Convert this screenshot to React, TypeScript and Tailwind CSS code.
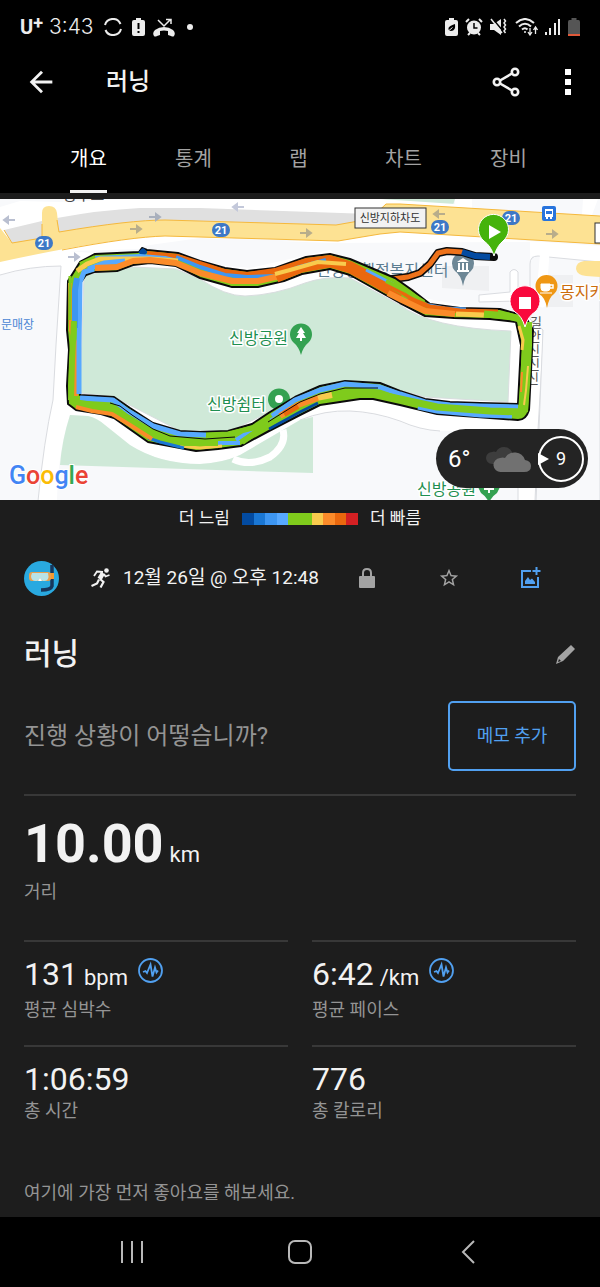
import { useState } from 'react';
import { MdArrowBack, MdStarBorder } from 'react-icons/md';

const TABS = ['개요', '통계', '랩', '차트', '장비'];

// slow -> fast
const PACE_COLORS = [
  '#034ba1',
  '#1a77d4',
  '#3d96f2',
  '#57a9ff',
  '#7fcb1c',
  '#7fcb1c',
  '#f9cb4d',
  '#fb8b2a',
  '#ea680e',
  '#d42023',
];

const STATS = [
  { value: '131', unit: 'bpm', label: '평균 심박수', pulse: true },
  { value: '6:42', unit: '/km', label: '평균 페이스', pulse: true },
  { value: '1:06:59', unit: '', label: '총 시간', pulse: false },
  { value: '776', unit: '', label: '총 칼로리', pulse: false },
];

interface TrackSegment {
  color: string;
  width: number;
  points: string;
}

const SEGMENTS: TrackSegment[] = [
  // top
  { color: '#034ba1', width: 5, points: '140,254 143,251 146,254' },
  { color: '#ea680e', width: 6, points: '147,254 178,257 200,264 225,272 247,275 275,271 306,261 330,258 350,264 376,278 400,290 425,306' },
  { color: '#57a9ff', width: 4, points: '85,264 96,258 140,256 165,258 182,262' },
  { color: '#7fcb1c', width: 4, points: '80,264 95,257' },
  { color: '#7fcb1c', width: 4, points: '176,259 192,266 204,272 232,284 256,284' },
  { color: '#3d96f2', width: 4, points: '176,257 200,267 225,275 247,277 275,276 300,267 326,260' },
  { color: '#f9cb4d', width: 5, points: '77,271 87,264 100,259 150,259 178,261' },
  { color: '#57a9ff', width: 5, points: '88,269 104,263 125,261' },
  { color: '#fb8b2a', width: 6, points: '95,268 117,267 133,261 150,260 176,263 200,273 232,281 258,281 284,275' },
  { color: '#ea680e', width: 7, points: '277,279 302,269 330,264 350,270 376,284 400,298' },
  { color: '#f9cb4d', width: 4, points: '275,274 290,270 318,262 346,264' },
  { color: '#57a9ff', width: 3, points: '366,270 393,284' },
  { color: '#7fcb1c', width: 4, points: '386,281 408,292 424,302' },
  // top right
  { color: '#3d96f2', width: 3, points: '424,304 445,308 466,309' },
  { color: '#ea680e', width: 5, points: '408,298 430,307 460,311 498,312' },
  { color: '#fb8b2a', width: 6, points: '388,293 402,300 425,311 455,314' },
  { color: '#f9cb4d', width: 5, points: '456,314 484,315' },
  { color: '#7fcb1c', width: 7, points: '484,314 508,316 520,319' },
  // right
  { color: '#7fcb1c', width: 10, points: '527,322 527,345 525,385 523,412' },
  { color: '#f9cb4d', width: 3, points: '519,326 523,340 522,350' },
  { color: '#f9cb4d', width: 2, points: '528,366 526,390 524,405' },
  { color: '#fb8b2a', width: 2, points: '522,372 521,392' },
  // bottom, right to left
  { color: '#57a9ff', width: 5, points: '518,407 480,406 450,405 425,402 400,394 380,387 345,384 320,390 295,400 272,416' },
  { color: '#57a9ff', width: 5, points: '512,416 480,415 437,411 418,407' },
  { color: '#7fcb1c', width: 7, points: '522,412 490,411 437,407 400,399 373,393 345,393 330,396' },
  { color: '#034ba1', width: 3, points: '269,429 300,412 318,403' },
  { color: '#f9cb4d', width: 6, points: '332,395 316,398' },
  { color: '#fb8b2a', width: 6, points: '318,398 298,405 280,416' },
  { color: '#ea680e', width: 6, points: '298,406 284,414' },
  { color: '#57a9ff', width: 4, points: '275,418 255,428 236,440' },
  { color: '#7fcb1c', width: 6, points: '280,417 262,428 242,442' },
  { color: '#7fcb1c', width: 5, points: '270,419 253,428 228,434 206,435' },
  { color: '#57a9ff', width: 5, points: '206,435 180,434 153,426 128,411 113,400 80,398' },
  { color: '#57a9ff', width: 4, points: '240,443 217,443' },
  { color: '#f9cb4d', width: 3, points: '222,446 200,448 180,446' },
  { color: '#7fcb1c', width: 6, points: '218,443 185,443 160,438 135,424 110,408 74,402' },
  { color: '#1a77d4', width: 3, points: '184,448 160,442 148,438' },
  { color: '#fb8b2a', width: 4, points: '152,439 130,425 112,414 92,411 76,407' },
  // left
  { color: '#fb8b2a', width: 4, points: '76,396 76,345 71,330 70,283' },
  { color: '#7fcb1c', width: 3, points: '70,320 70,276' },
  { color: '#57a9ff', width: 5, points: '79,394 79,345 80,282 84,272 94,269' },
  { color: '#3d96f2', width: 6, points: '75,328 75,290 77,278' },
  { color: '#7fcb1c', width: 6, points: '71,400 72,360 74,321' },
];

const TRACK_RING =
  'M142 248 L139 252 L95 254 L80 262 L68 281 L67 330 L69 350 L67 386 L68 404 L76 410 L101 414 L114 418 L148 442 L196 451 L218 449 L241 446 L269 431 L300 415 L320 405 L360 399 L373 399 L400 405 L437 414 L490 418 L518 420 Q526 420 529 410 L532 350 L533 330 L525 316 L500 309 L460 308 L430 304 L412 290 L395 278 L350 259 L330 254 L306 257 L275 268 L247 271 L225 268 L200 261 L178 253 L147 250 Z ' +
  'M79 350 L81 282 L86 275 L94 272 L117 271 L133 265 L150 263 L176 266 L200 278 L232 287 L258 287 L284 281 L302 274 L330 269 L350 275 L400 303 L425 316 L454 318 L490 319 L516 322 L521 345 L518 404 L480 403 L450 402 L425 399 L400 391 L380 383 L345 381 L320 386 L295 397 L270 412 L252 424 L228 431 L200 432 L180 431 L153 423 L130 408 L114 397 L80 395 Z';

function Shield({ x, y }: { x: number; y: number }) {
  return (
    <g>
      <rect x={x - 9} y={y - 7} width="18" height="14" rx="7" fill="#3d78c6" />
      <text x={x} y={y + 4} fontSize="11" fontWeight="700" fill="#fff" textAnchor="middle">
        21
      </text>
    </g>
  );
}

function RoadArrow({ x, y, left, color }: { x: number; y: number; left?: boolean; color: string }) {
  return (
    <path
      d={left ? `M${x + 6} ${y} h-10 M${x - 1} ${y - 3} l-4 3 4 3z` : `M${x - 6} ${y} h10 M${x + 1} ${y - 3} l4 3 -4 3z`}
      stroke={color}
      strokeWidth="2"
      fill={color}
    />
  );
}

function RouteMap() {
  return (
    <svg viewBox="0 199 600 301" className="block w-full" role="img" aria-label="러닝 경로 지도">
      <rect x="0" y="199" width="600" height="301" fill="#f8f9fb" />
      <path d="M380 199 H455 L453 205 L395 202Z" fill="#cfe9d8" />

      {/* White roads */}
      <g fill="#fff" stroke="#dadce0" strokeWidth="1">
        <path d="M0 207 L20 201 L60 202 L130 199 H380 L470 205 V225 L200 240 L60 262 L0 275 L-2 240Z" stroke="none" />
        <path d="M0 275 Q30 266 61 266 L56 345 L53 400 Q44 440 38 501 H57 Q58 450 70 415 L88 416 Q97 418 105 425 L130 445 Q160 464 200 464 Q222 463 240 455 L300 420 Q325 400 350 401 Q375 402 400 411 Q420 420 440 425 L518 425 V501 H535 L538 430 L543 345 L545 300 L530 262 L532 256 L600 262 V246 L400 232 L180 250 L60 255Z" stroke="none" />
        <path d="M300 420 Q325 410 350 411 Q375 412 400 421 Q420 430 440 431 H518 V410 H400 L350 395 L290 415Z" stroke="none" />
        <path d="M0 275 Q30 266 61 266 L56 345 L53 400 Q44 440 38 501" fill="none" />
        <path d="M518 501 V431 M535 501 L538 430 L543 345 L543 300" fill="none" />
        <path d="M300 420 Q325 410 350 411 Q375 412 400 421 Q420 430 440 431" fill="none" />
        <path d="M70 251 L140 249 L143 246 L200 238 L330 243 L530 242 L531 318 L380 290 L330 250 L250 268Z" fill="#f8f9fb" stroke="none" />
        <path d="M530 319 V264 Q530 256 538 256 L600 262 L600 502 L536 502 L543 330Z" fill="#f8f9fb" />
        <path d="M455 199 V209 L472 210 V199Z M583 199 L582 215 L592 215 L598 199Z M541 242 L536 300 Q541 312 546 305 L550 245Z" stroke="none" />
        <path d="M479 302 V295 L510 292 V272 Q514 267 518 272 V301Z" />
      </g>
      <path d="M300 421 Q325 411 350 412 Q375 413 400 422 Q420 431 440 432 H517 V500 H313 V420Z" fill="#f8f9fb" />
      <path d="M442 266 h47 v25 l-47 -3z M546 275 h27 v32 h-27z" fill="#eff0f2" />

      {/* Parks */}
      <g fill="#cfe9d8" stroke="#d9dddf" strokeWidth="1">
        <path d="M84 275 L133 267 L176 269 L200 279 Q225 296 245 296 Q275 295 305 283 Q325 276 350 278 L400 305 Q430 328 511 331 L508 402 L425 397 L380 385 L345 383 L320 388 L270 412 L230 431 L180 431 L114 397 L80 393Z" />
        <path d="M70 415 L88 416 Q97 418 105 425 L130 445 Q160 464 200 464 Q222 463 240 455 L300 420 L313 417 L313 473 L60 465 Q62 440 70 415Z" stroke="none" />
      </g>
      <path d="M283 430 Q287 445 270 457 Q250 467 233 459" fill="none" stroke="#fff" strokeWidth="7" />

      {/* Highway */}
      <path d="M4 230 L42 221 V239 L12 244Z M57 218 Q100 210 140 208 H200 L370 214 V220 L336 226 L200 221 L130 222 L59 233Z" fill="#e0e0e0" />
      <path d="M0 228 L12 243 L42 238 V213 Q42 206 49 206 Q56 206 57 213 L59 232 Q130 220 165 220 L336 225 L370 219 L386 204 L400 204 L600 216 V244 L400 232 L380 234 L338 241 L165 236 Q110 238 0 262Z" fill="#fde293" />
      <path d="M4 230 L12 243 L42 238 V224 M57 220 L59 232 Q130 220 165 220 L336 225 L370 219 L386 204 L400 204 L600 216 M600 244 L400 232 L380 234 L338 241 L165 236 Q130 237 62 250" fill="none" stroke="#f5b83c" strokeWidth="1" />
      <path d="M600 261 H584 Q576 262 576 269 Q577 275 586 276 L600 277Z" fill="#fde293" />
      <RoadArrow x={9} y={220} left color="#b9bfd0" />
      <RoadArrow x={155} y={217} color="#a9b0bd" />
      <RoadArrow x={136} y={229} color="#b8ad8b" />
      <RoadArrow x={238} y={207} left color="#c3c8da" />
      <RoadArrow x={306} y={233} color="#b8ad8b" />
      <RoadArrow x={439} y={214} left color="#b8ad8b" />
      <RoadArrow x={552} y={234} color="#b8ad8b" />
      <RoadArrow x={74} y={257} color="#b9bfd0" />
      <Shield x={44} y={243} />
      <Shield x={221} y={230} />
      <Shield x={440} y={227} />
      <Shield x={511} y={218} />

      {/* Underpass signs */}
      <rect x="355" y="208" width="71" height="20" fill="#f2f2f2" stroke="#333" />
      <text x="390" y="222" fontSize="11" fill="#333" textAnchor="middle">
        신방지하차도
      </text>
      <rect x="595" y="223" width="20" height="20" fill="#fff" stroke="#333" />

      {/* Bus stop */}
      <rect x="542" y="206" width="14" height="15" rx="2" fill="#2874dc" />
      <path d="M545 209 h8 v8 h-1 v2 h-2 v-2 h-2 v2 h-2 v-2 h-1z" fill="#fff" />
      <path d="M546 211 h6 v3 h-6z" fill="#2874dc" />

      <text x="63" y="200" fontSize="15" fill="#444">
        동우로
      </text>
      <text x="316" y="276" fontSize="16" fill="#5b7c90">
        신방동행정복지센터
      </text>
      <text x="1" y="329" fontSize="12" fill="#4a86d4">
        문매장
      </text>
      <g fontSize="13" fill="#555">
        <text x="530" y="327">길</text>
        <text x="529" y="341">안</text>
        <text x="528" y="355">신</text>
        <text x="528" y="369">신</text>
        <text x="527" y="383">신</text>
      </g>

      {/* Place pins */}
      <path d="M463 286 Q461 275 455 271 A11 11 0 1 1 471 271 Q465 275 463 286Z" fill="#6d8796" />
      <path d="M457 262 l6 -4 6 4z M457 270 h12 v2 h-12z" fill="#fff" />
      <path d="M459 263 v7 M463 263 v7 M467 263 v7" stroke="#fff" strokeWidth="2" />
      <path d="M547 308 Q545 297 539 294 A11 11 0 1 1 554 294 Q549 297 547 308Z" fill="#ef9714" />
      <path d="M541 284 h9 v4 q0 3 -3 3 h-3 q-3 0 -3 -3z M540 293 h12" fill="#fff" stroke="#fff" strokeWidth="1" />
      <path d="M550 285 h3 v3 h-3" fill="none" stroke="#fff" strokeWidth="1.5" />
      <path d="M301 355 Q299 347 293 342 A11 11 0 1 1 309 342 Q303 347 301 355Z" fill="#34a151" />
      <path d="M301 327 l4 6 h-2 l3 5 h-4 v3 h-2 v-3 h-4 l3 -5 h-2z" fill="#fff" />
      <path d="M279 417 Q277 410 271 407 A11 11 0 1 1 287 407 Q281 410 279 417Z" fill="#34a151" />
      <circle cx="279" cy="399" r="4" fill="#fff" />
      <path d="M489 503 Q487 497 481 493 L478 487 H500 L497 493 Q491 497 489 503Z" fill="#34a151" />
      <path d="M484 488 h10 v2 h-4 v3 h-2 v-3 h-4z" fill="#fff" />

      <g fontSize="16" strokeWidth="3" stroke="#fff" strokeLinejoin="round">
        <text x="229" y="344" fill="#1f8f50" className="[paint-order:stroke]">
          신방공원
        </text>
        <text x="207" y="410" fill="#1f8f50" className="[paint-order:stroke]">
          신방쉼터
        </text>
        <text x="417" y="495" fill="#1f8f50" className="[paint-order:stroke]">
          신방공원
        </text>
        <text x="560" y="298" fill="#cc6d0c" className="[paint-order:stroke]">
          몽지카
        </text>
      </g>

      {/* Track */}
      <g fill="none" strokeLinejoin="round" strokeLinecap="round">
        <path d="M392 279 L408 277 L420 273 L430 264 L438 253 L447 251 L462 252 L475 256 L494 257" stroke="#0b0b0b" strokeWidth="8" />
        <path d="M392 279 L408 277 L420 273 L430 264 L438 253 L447 251 L462 252" stroke="#ee721a" strokeWidth="5" />
        <path d="M462 252 L475 256 L490 257" stroke="#034ba1" strokeWidth="6" strokeLinecap="butt" />
      </g>
      <path d={TRACK_RING} fill="#7fcb1c" fillRule="evenodd" stroke="#0b0b0b" strokeWidth="2" strokeLinejoin="round" />
      {SEGMENTS.map((segment, i) => (
        <polyline
          key={i}
          points={segment.points}
          fill="none"
          stroke={segment.color}
          strokeWidth={segment.width}
          strokeLinejoin="round"
        />
      ))}
      {/* Gap between the laps */}
      <path
        d="M110 403 L120 406 L132 415 L153 429 L170 436 L205 439 L235 437 M268 422 L300 402 L320 394 L345 388 L378 388"
        fill="none"
        stroke="#0b0b0b"
        strokeWidth="1"
      />

      {/* Start and finish */}
      <path d="M494 256 Q491 246 484 241 A15 15 0 1 1 503 241 Q497 246 494 256Z" fill="#45b30b" stroke="#fff" strokeWidth="1" />
      <path d="M489 225 V239 L501 232Z" fill="#fff" />
      <path d="M525 327 Q522 316 515 312 A15 15 0 1 1 535 312 Q528 316 525 327Z" fill="#f9093c" stroke="#fff" strokeWidth="1" />
      <rect x="519" y="297" width="12" height="12" fill="#fff" />

      {/* Map attribution */}
      <text x="9" y="484" fontSize="25" fontWeight="500" stroke="#fff" strokeWidth="2" className="[paint-order:stroke]">
        <tspan fill="#4285f4">G</tspan>
        <tspan fill="#ea4335">o</tspan>
        <tspan fill="#fbbc05">o</tspan>
        <tspan fill="#4285f4">g</tspan>
        <tspan fill="#34a853">l</tspan>
        <tspan fill="#ea4335">e</tspan>
      </text>
    </svg>
  );
}

function WeatherPill() {
  return (
    <div className="absolute right-3 bottom-3 flex h-[59px] w-38 items-center rounded-full bg-[#242424] pr-1 pl-3 text-white">
      <span className="text-2xl">6°</span>
      <svg width="46" height="28" viewBox="0 0 46 28" className="ml-4" aria-hidden="true">
        <path d="M6 19 A6 6 0 0 1 6 7 Q8 6 10 7 A9 9 0 0 1 26 7 L26 19Z" fill="#3d3d3d" />
        <path d="M15 27 A7 7 0 0 1 14 13 Q17 12 19 13 A11 11 0 0 1 39 15 Q45 16 45 21 Q45 27 38 27Z" fill="#717171" />
      </svg>
      <div className="relative ml-auto flex size-[46px] items-center justify-center rounded-full border-2 border-white text-lg">
        <svg width="11" height="12" viewBox="0 0 11 12" className="absolute -left-0.5" aria-hidden="true">
          <path d="M0 0 L11 6 L0 12Z" fill="#fff" />
        </svg>
        9
      </div>
    </div>
  );
}

function StatusBar() {
  return (
    <div className="flex h-[54px] items-center justify-between px-5 text-[#ececec]">
      <div className="flex items-center">
        <span className="text-xl leading-6 font-bold">U</span>
        <span className="self-start text-lg leading-4 font-bold">+</span>
        <span className="ml-1.5 font-['Inter',sans-serif] text-[21px] leading-6 font-light">3:43</span>
        <svg width="18" height="18" viewBox="0 0 18 18" className="ml-2.5" fill="none" stroke="currentColor" strokeWidth="2">
          <path d="M1 7 A8.2 8.2 0 0 1 16.500 6 M17 11 A8.200 8.200 0 0 1 1.500 12" />
        </svg>
        <svg width="13" height="18" viewBox="0 0 13 18" className="ml-2.5" fill="currentColor">
          <path fillRule="evenodd" d="M4 0 h5 v2 h2 q2 0 2 2 v12 q0 2 -2 2 h-9 q-2 0 -2 -2 v-12 q0 -2 2 -2 h2z M5.500 5 v6 h2 v-6z M5.500 13 v2 h2 v-2z" />
        </svg>
        <svg width="22" height="19" viewBox="0 0 22 19" className="ml-2" fill="currentColor">
          <path d="M11 9 Q16 9 20 12 Q23 15 21 18 Q20 19 18 18 L15 17 V13 Q11 12 7 13 V17 L4 18 Q2 19 1 18 Q-1 15 2 12 Q6 9 11 9Z" />
          <path d="M5 2 L11 8 L17 2 M13 1.500 H18 V6" fill="none" stroke="currentColor" strokeWidth="1.5" />
        </svg>
        <span className="ml-3 size-1.5 rounded-full bg-[#ececec]" />
      </div>
      <div className="flex items-center gap-[7px]">
        <svg width="13" height="18" viewBox="0 0 13 18" fill="currentColor">
          <path d="M4 0 h5 v2 h2 q2 0 2 2 v12 q0 2 -2 2 h-9 q-2 0 -2 -2 v-12 q0 -2 2 -2 h2z" />
          <path d="M10 6 Q11 13 6 13 Q3 13 3.500 10 Q4 8 10 6Z" fill="#000" />
          <path d="M2 13.500 Q5 12 7.500 9.500" fill="none" stroke="#ececec" strokeWidth="1" />
        </svg>
        <svg width="18" height="18" viewBox="0 0 18 18" fill="currentColor">
          <circle cx="9" cy="9.500" r="7" />
          <path d="M1 4 L4 1 M14 1 L17 4 M3 17 L5 15 M15 17 L13 15" stroke="currentColor" strokeWidth="2" />
          <path d="M9 5 V10 H12.500" fill="none" stroke="#000" strokeWidth="1.500" />
        </svg>
        <svg width="18" height="18" viewBox="0 0 18 18" fill="currentColor">
          <path d="M0 6 H4 L11 1 V17 L4 12 H0Z" />
          <path d="M2 0 L13 13" stroke="#000" strokeWidth="1.500" />
          <path d="M1 1 L12 15" stroke="currentColor" strokeWidth="1.500" />
          <path d="M14 1 l1.500 2 -1.500 2 1.500 2 -1.500 2 1.500 2 -1.500 2 1.500 2" fill="none" stroke="currentColor" strokeWidth="1.500" />
        </svg>
        <svg width="23" height="18" viewBox="0 0 23 18" fill="none" stroke="currentColor" strokeWidth="2">
          <path d="M1 5 Q10 -3 19 5 M4 8.500 Q10 3 16 8.500 M7 11.500 Q10 9 12.500 11.500" />
          <circle cx="10" cy="14" r="1" fill="currentColor" stroke="none" />
          <path d="M15 10 V16 M13 14 l2 3 2 -3 M20.500 16 V10 M18.500 12 l2 -3 2 3" strokeWidth="1.300" />
        </svg>
        <svg width="16" height="18" viewBox="0 0 16 18" fill="currentColor">
          <path d="M0 14 h2 v3 h-2z M4 10 h2 v7 h-2z M9 5 h2 v12 h-2z M13 1 h2 v16 h-2z" />
        </svg>
        <svg width="12" height="18" viewBox="0 0 12 18">
          <path d="M3.500 0 h5 v2 h2 q1.500 0 1.500 2 v14 h-12 v-14 q0 -2 1.500 -2 h2z" fill="#555" />
          <path d="M0 16 h12 v2 h-12z" fill="#e0593a" />
        </svg>
      </div>
    </div>
  );
}

function PulseIcon() {
  return (
    <svg width="25" height="25" viewBox="0 0 25 25" fill="none" stroke="#51a0f0" aria-hidden="true">
      <circle cx="12.500" cy="12.500" r="11.500" strokeWidth="1.800" />
      <path d="M5 14 L7.500 13 L9 15 L12.500 6.500 L14.500 18.500 L17 9.500 L18.500 14.500 L20 12.500" strokeWidth="1.800" />
    </svg>
  );
}

export default function App() {
  const [activeTab, setActiveTab] = useState('개요');

  return (
    <div className="flex min-h-screen flex-col bg-[#1d1d1d] font-['Roboto','Noto_Sans_CJK_KR',sans-serif] text-[#f2f2f2]">
      <header className="border-b-[6px] border-[#1c1c1c] bg-black">
        <StatusBar />
        <div className="flex h-14 items-center pr-5 pl-6">
          <button aria-label="뒤로">
            <MdArrowBack size={34} />
          </button>
          <h1 className="ml-12 text-2xl font-medium">러닝</h1>
          <button className="ml-auto" aria-label="공유">
            <svg width="28" height="30" viewBox="0 0 28 30" fill="none" stroke="currentColor" strokeWidth="2.600">
              <circle cx="23" cy="5" r="3.200" />
              <circle cx="5" cy="15" r="3.200" />
              <circle cx="23" cy="25" r="3.200" />
              <path d="M8 13.500 L20 6.500 M8 16.500 L20 23.500" />
            </svg>
          </button>
          <button className="ml-9 flex w-6 flex-col items-center gap-1" aria-label="더보기">
            <span className="size-1.5 bg-white" />
            <span className="size-1.5 bg-white" />
            <span className="size-1.5 bg-white" />
          </button>
        </div>
        <nav className="mt-[18px] grid h-[65px] grid-cols-5 pr-[39px] pl-9">
          {TABS.map((tab) => (
            <button key={tab} onClick={() => setActiveTab(tab)} className="flex justify-center text-xl">
              <span
                className={`flex h-full items-center border-b-[3px] ${
                  tab === activeTab ? 'border-[#f2f2f2] text-white' : 'border-transparent text-[#a3a3a3]'
                }`}
              >
                {tab}
              </span>
            </button>
          ))}
        </nav>
      </header>

      <div className="relative">
        <RouteMap />
        <WeatherPill />
      </div>

      {/* Pace legend */}
      <div className="flex h-[37px] items-center justify-center gap-3 text-[17px]">
        <span>더 느림</span>
        <div className="flex h-3 w-29">
          {PACE_COLORS.map((color, i) => (
            <span key={i} className="flex-1" style={{ background: color }} />
          ))}
        </div>
        <span>더 빠름</span>
      </div>

      <main className="px-6 pb-3">
        <div className="flex h-[82px] items-center">
          <svg width="35" height="35" viewBox="0 0 35 35" role="img" aria-label="프로필">
            <circle cx="17.500" cy="17.500" r="17.500" fill="#29a9e0" />
            <path d="M28 4 V25 Q27 29 17 29" fill="none" stroke="#17375c" strokeWidth="3.500" />
            <path d="M26 12 h4 v6 h-4z" fill="#f39a32" />
            <rect x="5" y="11" width="22" height="9" rx="3" fill="#e9a04e" />
            <path d="M8 12 H24 Q26 20 20 20 Q17 20 16 17 Q15 20 12 20 Q7 20 7 15Z" fill="#b9e3e6" />
            <path d="M14 20 l2 -3 2 3z" fill="#fff" />
          </svg>
          <svg width="20" height="20" viewBox="0 0 20 20" className="ml-8" fill="none" stroke="currentColor" aria-hidden="true">
            <circle cx="15.500" cy="2.500" r="2.300" fill="currentColor" stroke="none" />
            <path d="M12 5 L8.500 11" strokeWidth="4.500" />
            <path d="M12 4 L6 3.500 L3 8 M13 6 L14.500 8.500 L18.500 7" strokeWidth="1.800" />
            <path d="M9 11 L12.500 14 L9.500 19.500 M8 11.500 L6 15.500 L0.500 18" strokeWidth="2.200" />
          </svg>
          <time className="ml-3 text-[19px]">12월 26일 @ 오후 12:48</time>
          <div className="mr-1 ml-auto flex text-[#a3a3a3]">
            <button className="flex w-[82px] justify-center" aria-label="공개 설정">
              <svg width="16" height="21" viewBox="0 0 16 21" fill="currentColor">
                <rect x="0" y="9" width="16" height="12" rx="1" />
                <path d="M4 10 V6 Q4 2 8 2 Q12 2 12 6 V10" fill="none" stroke="currentColor" strokeWidth="2" />
              </svg>
            </button>
            <button className="flex w-[82px] justify-center" aria-label="즐겨찾기">
              <MdStarBorder size={22} />
            </button>
            <button className="flex w-[82px] justify-center" aria-label="사진 추가">
              <svg width="20" height="21" viewBox="0 0 20 21" fill="none" stroke="#51a0f0" strokeWidth="2">
                <path d="M10 4 H1 V20 H17 V10 M15.500 0 V8 M11.500 4 H19.500" />
                <path d="M4 17 V14 L7 10 L9 13 L11 11.500 L14 15 V17Z" fill="#51a0f0" stroke="none" />
              </svg>
            </button>
          </div>
        </div>

        <div className="flex h-[70px] items-center justify-between">
          <h2 className="text-3xl font-medium">러닝</h2>
          <button aria-label="이름 편집">
            <svg width="21" height="21" viewBox="0 0 21 21" fill="#a3a3a3">
              <path fillRule="evenodd" d="M16 1 L20 5 L8 17 L1 20 L3 13Z M4 15 L3 18 L6 17Z" />
            </svg>
          </button>
        </div>

        <div className="mt-3 flex items-center justify-between border-b-2 border-[#383838] pb-[23px]">
          <p className="text-2xl text-[#949494]">진행 상황이 어떻습니까?</p>
          <button className="h-[70px] w-32 rounded-[5px] border-2 border-[#51a0f0] text-lg text-[#51a0f0]">메모 추가</button>
        </div>

        <section className="pt-5 pb-9">
          <div className="flex items-baseline gap-1.5">
            <span className="text-[54px] leading-14 font-bold">10.00</span>
            <span className="text-[22px]">km</span>
          </div>
          <p className="mt-2 text-lg leading-6 text-[#949494]">거리</p>
        </section>

        <section className="grid grid-cols-2 gap-x-6">
          {STATS.map((stat) => (
            <div key={stat.label} className="h-[105px] border-t-2 border-[#383838] pt-3">
              <div className="flex">
                <div className="flex items-baseline gap-1.5 leading-10">
                  <span className="text-[32px]">{stat.value}</span>
                  {stat.unit && <span className="text-[22px]">{stat.unit}</span>}
                </div>
                {stat.pulse && (
                  <div className="pt-1 pl-2.5">
                    <PulseIcon />
                  </div>
                )}
              </div>
              <p className="text-lg leading-6 text-[#949494]">{stat.label}</p>
            </div>
          ))}
        </section>

        <p className="mt-[31px] text-lg leading-6 text-[#949494]">여기에 가장 먼저 좋아요를 해보세요.</p>
      </main>

      {/* System navigation */}
      <footer className="grid h-[70px] shrink-0 grid-cols-3 bg-black px-12 text-[#b8b8b8]">
        <button className="flex items-center justify-center" aria-label="최근 앱">
          <svg width="22" height="22" viewBox="0 0 22 22" stroke="currentColor" strokeWidth="2">
            <path d="M1 0 V22 M11 0 V22 M21 0 V22" />
          </svg>
        </button>
        <button className="flex items-center justify-center" aria-label="홈">
          <svg width="24" height="24" viewBox="0 0 24 24" fill="none" stroke="currentColor" strokeWidth="2">
            <rect x="1" y="1" width="22" height="22" rx="6" />
          </svg>
        </button>
        <button className="flex items-center justify-center" aria-label="뒤로 가기">
          <svg width="14" height="24" viewBox="0 0 14 24" fill="none" stroke="currentColor" strokeWidth="2">
            <path d="M13 1 L2 12 L13 23" />
          </svg>
        </button>
      </footer>
    </div>
  );
}
